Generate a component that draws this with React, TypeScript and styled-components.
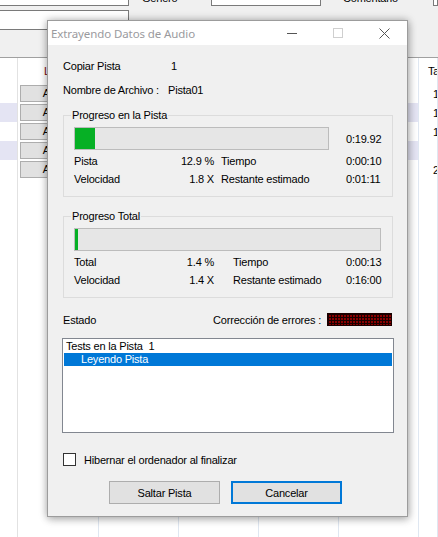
import React from "react";
import styled, { createGlobalStyle } from "styled-components";

const Global = createGlobalStyle`
  html, body { margin: 0; padding: 0; }
  body {
    background: #f0f0f0;
    font-family: "Liberation Sans", Arial, sans-serif;
    font-size: 11px;
    letter-spacing: -0.2px;
    color: #000;
    overflow: hidden;
  }
  * { box-sizing: border-box; }
`;

const Screen = styled.div`
  position: relative;
  width: 438px;
  height: 537px;
  overflow: hidden;
  display: flex;
  flex-direction: column;
  background: #f0f0f0;
`;

/* ---------- background application ---------- */
const TopPanel = styled.div`
  height: 58px;
  flex: none;
  border-bottom: 1px solid #a0a0a0;
  display: flex;
  flex-direction: column;
  gap: 4px;
`;

const FormRow = styled.div<{ $top?: number }>`
  display: flex;
  height: 20px;
  margin-top: ${(p) => p.$top ?? 0}px;
  margin-left: -1px;
`;

const Field = styled.div<{ $w?: number }>`
  width: ${(p) => (p.$w ? `${p.$w}px` : "auto")};
  flex: ${(p) => (p.$w ? "none" : "1")};
  height: 20px;
  background: #fff;
  border: 1px solid #7a7a7a;
`;

const FormLabel = styled.div<{ $w: number; $ml: number }>`
  width: ${(p) => p.$w}px;
  margin-left: ${(p) => p.$ml}px;
  padding-top: 2px;
  line-height: 20px;
  white-space: nowrap;
  overflow: hidden;
`;

const List = styled.div`
  flex: 1;
  display: flex;
  flex-direction: column;
  background: #fff;
`;

const GridRow = styled.div<{ $h?: number; $fill?: boolean }>`
  display: grid;
  grid-template-columns: 18px 81px 80px 80px 80px 80px 1fr;
  height: ${(p) => (p.$h ? `${p.$h}px` : "auto")};
  flex: ${(p) => (p.$fill ? "1" : "none")};
`;

const Cell = styled.div<{ $shade?: boolean; $line?: string }>`
  border-right: 1px solid ${(p) => p.$line ?? "#dfe7f1"};
  background: ${(p) => (p.$shade ? "#e4e4f3" : "#fff")};
  display: flex;
  align-items: center;
  overflow: hidden;
  white-space: nowrap;
`;

const HeadText = styled.span<{ $pl?: number; $color?: string }>`
  padding-left: ${(p) => p.$pl ?? 0}px;
  color: ${(p) => p.$color ?? "#000"};
  line-height: 26px;
`;

const RowButton = styled.div`
  margin: 1px 2px 1px 2px;
  flex: 1;
  height: 17px;
  background: #e1e1e1;
  border: 1px solid #adadad;
  text-align: center;
  line-height: 15px;
`;

const SizeText = styled.span`
  padding-left: 14px;
`;

/* ---------- dialog ---------- */
const Dialog = styled.div`
  position: absolute;
  left: 47px;
  top: 20px;
  width: 361px;
  height: 497px;
  border: 1px solid #9c9c9c;
  background: #f0f0f0;
  box-shadow: 0 0 8px rgba(0, 0, 0, 0.28), 1px 3px 8px rgba(0, 0, 0, 0.18);
  display: flex;
  flex-direction: column;
`;

const TitleBar = styled.div`
  height: 24px;
  background: #fff;
  display: flex;
  align-items: center;
  flex: none;
`;

const TitleText = styled.div`
  flex: 1;
  padding-left: 3px;
  font-family: "Noto Sans", "Liberation Sans", sans-serif;
  font-size: 11.5px;
  letter-spacing: -0.1px;
  color: #9a9a9e;
  white-space: nowrap;
`;

const TitleBtn = styled.div`
  width: 46px;
  height: 24px;
  display: flex;
  align-items: center;
  justify-content: center;
`;

const Body = styled.div`
  flex: 1;
  display: flex;
  flex-direction: column;
  padding: 12px 13px 0 14px;
`;

const InfoRow = styled.div<{ $mt?: number }>`
  display: grid;
  grid-template-columns: 105px auto;
  height: 18px;
  line-height: 18px;
  padding-left: 1px;
  margin-top: ${(p) => p.$mt ?? 0}px;
`;

const InfoValue = styled.span<{ $pl?: number }>`
  padding-left: ${(p) => p.$pl ?? 0}px;
`;

const Group = styled.div<{ $mt: number }>`
  position: relative;
  margin: ${(p) => p.$mt}px 1px 0 1px;
  border: 1px solid #dcdcdc;
  padding: 11px 0 8px 10px;
`;

const Legend = styled.div`
  position: absolute;
  top: -8px;
  left: 7px;
  padding: 0 1px;
  line-height: 14px;
  background: #f0f0f0;
`;

const BarRow = styled.div`
  display: flex;
  align-items: center;
  height: 23px;
`;

const Bar = styled.div<{ $w: number }>`
  width: ${(p) => p.$w}px;
  height: 23px;
  border: 1px solid #bcbcbc;
  background: #e6e6e6;
  display: flex;
`;

const Fill = styled.div`
  height: 100%;
  background: #06b025;
`;

const BarTime = styled.div`
  margin-left: 17px;
`;

const Stats = styled.div`
  margin-top: 2px;
  display: grid;
  grid-template-columns: 90px 50px 132px auto;
  grid-auto-rows: 18px;
  line-height: 18px;
  white-space: nowrap;
`;

const StatValue = styled.div`
  text-align: right;
`;

const StatLabel2 = styled.div<{ $pl: number }>`
  padding-left: ${(p) => p.$pl}px;
`;

const StatusRow = styled.div`
  margin-top: 15px;
  height: 13px;
  display: flex;
  align-items: center;
  padding: 0 2px 0 1px;
`;

const StatusLabel = styled.div`
  flex: 1;
`;

const ErrorGrid = styled.div`
  width: 65px;
  height: 13px;
  margin-left: 6px;
  background-color: #8a0000;
  background-image: linear-gradient(to right, #1a0000 1px, transparent 1px),
    linear-gradient(to bottom, #1a0000 1px, transparent 1px);
  background-size: 3px 3px;
  border: 1px solid #1a0000;
`;

const LogBox = styled.div`
  margin-top: 12px;
  height: 95px;
  border: 1px solid #828790;
  background: #fff;
  padding: 1px;
`;

const LogItem = styled.div<{ $sel?: boolean; $indent: number }>`
  height: 13px;
  line-height: 13px;
  padding-left: ${(p) => p.$indent}px;
  background: ${(p) => (p.$sel ? "#0078d7" : "transparent")};
  color: ${(p) => (p.$sel ? "#fff" : "#000")};
  white-space: pre;
`;

const CheckRow = styled.label`
  margin-top: 20px;
  height: 13px;
  display: flex;
  align-items: center;
  padding-left: 1px;
`;

const CheckBox = styled.span`
  width: 13px;
  height: 13px;
  border: 1px solid #333;
  background: #fff;
  flex: none;
`;

const CheckText = styled.span`
  margin-left: 8px;
`;

const ButtonRow = styled.div`
  margin-top: 15px;
  display: flex;
  gap: 11px;
  padding-left: 47px;
`;

const Button = styled.button<{ $default?: boolean }>`
  width: 111px;
  height: 23px;
  font: inherit;
  letter-spacing: inherit;
  color: #000;
  background: #e1e1e1;
  border: ${(p) => (p.$default ? "2px solid #0078d7" : "1px solid #adadad")};
  padding: 0;
  margin: 0;
`;

const rows = [
  { shade: false, size: "14.25 MB" },
  { shade: true, size: "12.08 MB" },
  { shade: false, size: "15.73 MB" },
  { shade: true, size: "" },
  { shade: false, size: "22.40 MB" },
];

export default function App() {
  return (
    <Screen>
      <Global />
      <TopPanel>
        <FormRow $top={-14}>
          <Field $w={130} />
          <FormLabel $w={69} $ml={13}>Género</FormLabel>
          <Field $w={110} />
          <FormLabel $w={90} $ml={22}>Comentario</FormLabel>
          <Field />
        </FormRow>
        <FormRow>
          <Field $w={130} />
        </FormRow>
      </TopPanel>
      <List>
        <GridRow $h={26}>
          <Cell $line="#e2e2e2" />
          <Cell>
            <HeadText $pl={26} $color="#7a0a0a">Leer</HeadText>
          </Cell>
          <Cell />
          <Cell />
          <Cell />
          <Cell />
          <Cell>
            <HeadText $pl={9}>Tamaño</HeadText>
          </Cell>
        </GridRow>
        {rows.map((r, i) => (
          <GridRow $h={19} key={i}>
            <Cell $shade={r.shade} $line="#e2e2e2" />
            <Cell>
              <RowButton>Añadir</RowButton>
            </Cell>
            <Cell $shade={r.shade} />
            <Cell $shade={r.shade} />
            <Cell $shade={r.shade} />
            <Cell $shade={r.shade} />
            <Cell>
              <SizeText>{r.size}</SizeText>
            </Cell>
          </GridRow>
        ))}
        <GridRow $fill>
          <Cell $line="#e2e2e2" />
          <Cell />
          <Cell />
          <Cell />
          <Cell />
          <Cell />
          <Cell />
        </GridRow>
      </List>

      <Dialog>
        <TitleBar>
          <TitleText>Extrayendo Datos de Audio</TitleText>
          <TitleBtn>
            <svg width="10" height="10" viewBox="0 0 10 10">
              <path d="M0 5.5H10" stroke="#555" strokeWidth="1" />
            </svg>
          </TitleBtn>
          <TitleBtn>
            <svg width="10" height="10" viewBox="0 0 10 10">
              <rect x="0.5" y="0.5" width="9" height="9" fill="none" stroke="#cfcfcf" />
            </svg>
          </TitleBtn>
          <TitleBtn>
            <svg width="11" height="11" viewBox="0 0 11 11">
              <path d="M0.5 0.5L10.5 10.5M10.5 0.5L0.5 10.5" stroke="#555" strokeWidth="1" />
            </svg>
          </TitleBtn>
        </TitleBar>
        <Body>
          <InfoRow>
            <span>Copiar Pista</span>
            <InfoValue $pl={3}>1</InfoValue>
          </InfoRow>
          <InfoRow $mt={6}>
            <span>Nombre de Archivo :</span>
            <InfoValue>Pista01</InfoValue>
          </InfoRow>

          <Group $mt={16}>
            <Legend>Progreso en la Pista</Legend>
            <BarRow>
              <Bar $w={255}>
                <Fill style={{ width: 20 }} />
              </Bar>
              <BarTime>0:19.92</BarTime>
            </BarRow>
            <Stats>
              <div>Pista</div>
              <StatValue>12.9 %</StatValue>
              <StatLabel2 $pl={7}>Tiempo</StatLabel2>
              <div>0:00:10</div>
              <div>Velocidad</div>
              <StatValue>1.8 X</StatValue>
              <StatLabel2 $pl={7}>Restante estimado</StatLabel2>
              <div>0:01:11</div>
            </Stats>
          </Group>

          <Group $mt={19}>
            <Legend>Progreso Total</Legend>
            <BarRow>
              <Bar $w={307}>
                <Fill style={{ width: 3 }} />
              </Bar>
            </BarRow>
            <Stats>
              <div>Total</div>
              <StatValue>1.4 %</StatValue>
              <StatLabel2 $pl={19}>Tiempo</StatLabel2>
              <div>0:00:13</div>
              <div>Velocidad</div>
              <StatValue>1.4 X</StatValue>
              <StatLabel2 $pl={19}>Restante estimado</StatLabel2>
              <div>0:16:00</div>
            </Stats>
          </Group>

          <StatusRow>
            <StatusLabel>Estado</StatusLabel>
            <span>Corrección de errores :</span>
            <ErrorGrid />
          </StatusRow>

          <LogBox>
            <LogItem $indent={2}>Tests en la Pista  1</LogItem>
            <LogItem $indent={17} $sel>
              Leyendo Pista
            </LogItem>
          </LogBox>

          <CheckRow>
            <CheckBox />
            <CheckText>Hibernar el ordenador al finalizar</CheckText>
          </CheckRow>

          <ButtonRow>
            <Button>Saltar Pista</Button>
            <Button $default>Cancelar</Button>
          </ButtonRow>
        </Body>
      </Dialog>
    </Screen>
  );
}
